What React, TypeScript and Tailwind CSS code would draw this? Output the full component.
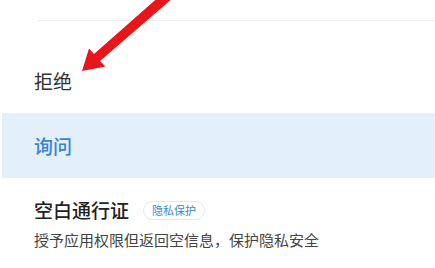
import React from 'react';

const FONT = { fontFamily: '"Noto Sans CJK SC", "Noto Sans", sans-serif' };

export default function App() {
  return (
    <div className="relative w-[435px] h-[268px] overflow-hidden bg-white" style={FONT}>
      {/* previous item divider */}
      <div className="h-[21px] ml-[37px] border-b border-[#eeeeee]" />

      {/* deny */}
      <div className="mt-[27px] h-[65px] flex items-center pl-[34px]">
        <span className="text-[19px] leading-[22px] text-[#333333]">拒绝</span>
      </div>

      {/* ask (selected) */}
      <div className="ml-[2px] h-[65px] flex items-center pl-[32px] bg-[#e4effc]">
        <span className="text-[19px] leading-[22px] font-medium text-[#3685cf]">询问</span>
      </div>

      {/* blank pass */}
      <div className="pl-[34px] pt-[21px]">
        <div className="flex items-center h-[22px]">
          <span className="text-[19px] leading-[22px] font-medium text-[#222222]">空白通行证</span>
          <span className="ml-[14px] h-[19px] px-[8px] flex items-center rounded-full border border-[#e3e8ee] text-[11px] leading-none text-[#3a88d2]">
            隐私保护
          </span>
        </div>
        <div className="mt-[9px] text-[15px] leading-[20px] text-[#444444]">
          授予应用权限但返回空信息，保护隐私安全
        </div>
      </div>

      {/* red annotation arrow */}
      <svg className="absolute top-0 left-0 pointer-events-none" width="435" height="100" viewBox="0 0 435 100">
        <polygon
          points="82,71 89,48.5 94,54 165.5,-9 173,-2 100,61 105.5,66.5"
          fill="#e8151b"
        />
      </svg>
    </div>
  );
}
